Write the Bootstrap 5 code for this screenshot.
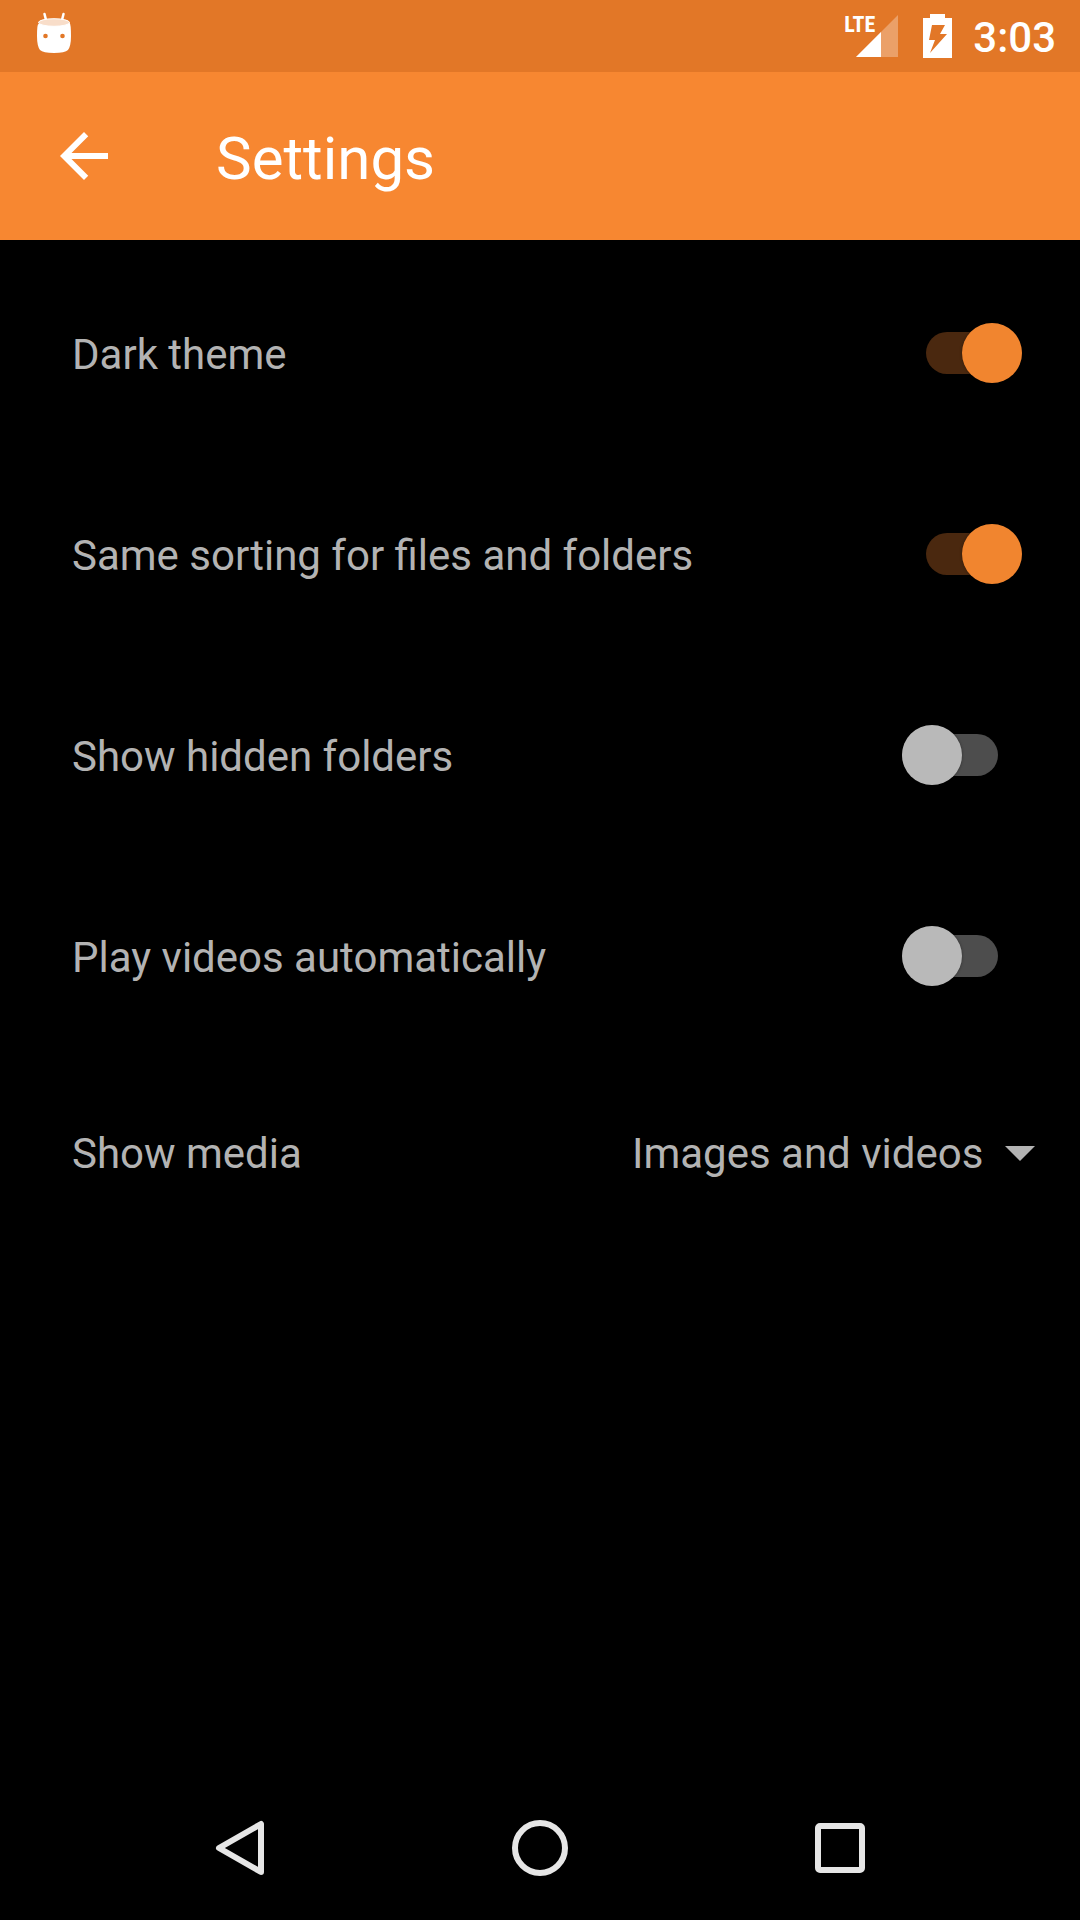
<!DOCTYPE html>
<html lang="en">
<head>
<meta charset="utf-8">
<meta name="viewport" content="width=device-width, initial-scale=1">
<title>Settings</title>
<link rel="stylesheet" href="https://cdn.jsdelivr.net/npm/bootstrap@5.3.0/dist/css/bootstrap.min.css">
<style>
  body { background: #000; color: #b3b3b3; font-family: Roboto, sans-serif; font-size: 42px; line-height: 50px; }
  svg { display: block; }
  .status-bar { background: #e27727; height: 72px; padding: 0 24px 0 36px; color: #fff; }
  .signal { position: relative; margin-right: 24px; }
  .signal-label { position: absolute; top: 15px; right: 24px; font-family: "Roboto Condensed", Roboto, sans-serif; font-size: 22px; line-height: 20px; font-weight: 700; }
  .clock { margin-left: 21px; padding-top: 3px; font-weight: 500; }
  .app-bar { background: #f78731; height: 168px; color: #fff; padding: 0 48px; }
  .app-bar h1 { font-size: 60px; line-height: 72px; font-weight: 400; padding-top: 6px; }
  .back-link { margin-right: 96px; }
  .settings { padding-top: 12px; }
  .setting { height: 201px; padding-left: 72px; }
  .setting-media { height: 191px; }
  .setting label { padding-top: 5px; }
  .setting .switch {
    appearance: none; display: flex; align-items: center; flex: none;
    width: 96px; height: 42px; margin: 0 82px 0 0; border: 0; border-radius: 21px; background: #4d4d4d;
  }
  .switch::before { content: ""; flex: none; width: 60px; height: 60px; border-radius: 50%; background: #b9b9b9; box-shadow: 0 0 3px rgba(0, 0, 0, .4); }
  .setting .switch:checked { justify-content: flex-end; margin-right: 58px; background: #4a280f; }
  .switch:checked::before { background: #f1852f; }
  .setting .media-select {
    width: auto; color: inherit; font-size: 42px; line-height: 50px; border: 0; border-radius: 0;
    padding: 5px 96px 0 0; background-color: transparent;
    background-image: url("data:image/svg+xml,%3Csvg xmlns='http://www.w3.org/2000/svg' viewBox='0 0 30 15'%3E%3Cpath fill='%23b3b3b3' d='M0 0h30L15 15z'/%3E%3C/svg%3E");
    background-size: 30px 15px; background-position: right 45px top 22px;
  }
  .nav-keys { height: 144px; padding: 0 90px; }
  .nav-keys button { border-radius: 0; }
</style>
</head>
<body>
<div class="d-flex flex-column min-vh-100">
  <div class="status-bar d-flex align-items-center justify-content-between">
    <svg width="36" height="72" viewBox="0 0 36 72" aria-hidden="true">
      <path d="M8.500 14l2 8M27.500 14l-2 8" stroke="#fff" stroke-width="2.500" stroke-linecap="round"/>
      <path d="M2.500 24Q1 24 1 36Q1 46 4 50Q7 53 18 53Q29 53 32 50Q35 46 35 36Q35 24 33.500 22.500z" fill="#fff"/>
      <ellipse cx="18" cy="22.500" rx="15.500" ry="3.800" fill="#f8ddc9" stroke="#fff"/>
      <circle cx="9.500" cy="36" r="2.300" fill="#e27727"/><circle cx="26.500" cy="36" r="2.300" fill="#e27727"/>
    </svg>
    <div class="d-flex align-items-center">
      <div class="signal">
        <span class="signal-label">LTE</span>
        <svg width="44" height="72" viewBox="0 0 44 72" aria-hidden="true">
          <path d="M43 15V57H1z" fill="#fff" fill-opacity=".3"/><path d="M26 32V57H1z" fill="#fff"/>
        </svg>
      </div>
      <svg width="29" height="72" viewBox="0 0 29 72" aria-hidden="true">
        <path d="M7 14H22V18H29V58H0V18H7z" fill="#fff"/>
        <path d="M9 25H22L17 34H24L7 53L12 40H6z" fill="#e27727"/>
      </svg>
      <span class="clock">3:03</span>
    </div>
  </div>
  <header class="app-bar d-flex align-items-center">
    <a class="back-link" href="#" aria-label="Back">
      <svg width="72" height="72" viewBox="0 0 24 24" fill="#fff"><path d="M20 11H7.830l5.590-5.590L12 4l-8 8 8 8 1.410-1.410L7.830 13H20v-2z"/></svg>
    </a>
    <h1 class="mb-0">Settings</h1>
  </header>
  <main class="settings flex-grow-1">
    <div class="setting d-flex align-items-center justify-content-between">
      <label for="dark">Dark theme</label>
      <input class="switch" type="checkbox" role="switch" id="dark" checked>
    </div>
    <div class="setting d-flex align-items-center justify-content-between">
      <label for="sorting">Same sorting for files and folders</label>
      <input class="switch" type="checkbox" role="switch" id="sorting" checked>
    </div>
    <div class="setting d-flex align-items-center justify-content-between">
      <label for="hidden-folders">Show hidden folders</label>
      <input class="switch" type="checkbox" role="switch" id="hidden-folders">
    </div>
    <div class="setting d-flex align-items-center justify-content-between">
      <label for="autoplay">Play videos automatically</label>
      <input class="switch" type="checkbox" role="switch" id="autoplay">
    </div>
    <div class="setting setting-media d-flex align-items-center justify-content-between">
      <label for="media">Show media</label>
      <select class="form-select media-select" id="media">
        <option>Images and videos</option>
      </select>
    </div>
  </main>
  <nav class="nav-keys d-flex align-items-stretch" aria-label="System">
    <button class="btn col-4 p-0 d-flex align-items-center justify-content-center" type="button" aria-label="Back">
      <svg width="60" height="60" viewBox="0 0 60 60"><path d="M51 6V54L9 30z" fill="none" stroke="#e6e6e6" stroke-width="6" stroke-linejoin="round"/></svg>
    </button>
    <button class="btn col-4 p-0 d-flex align-items-center justify-content-center" type="button" aria-label="Home">
      <svg width="60" height="60" viewBox="0 0 60 60"><circle cx="30" cy="30" r="25" fill="none" stroke="#e6e6e6" stroke-width="6"/></svg>
    </button>
    <button class="btn col-4 p-0 d-flex align-items-center justify-content-center" type="button" aria-label="Recent apps">
      <svg width="60" height="60" viewBox="0 0 60 60"><rect x="8" y="8" width="44" height="44" rx="2" fill="none" stroke="#e6e6e6" stroke-width="6"/></svg>
    </button>
  </nav>
</div>
<script src="https://cdn.jsdelivr.net/npm/bootstrap@5.3.0/dist/js/bootstrap.bundle.min.js"></script>
</body>
</html>
